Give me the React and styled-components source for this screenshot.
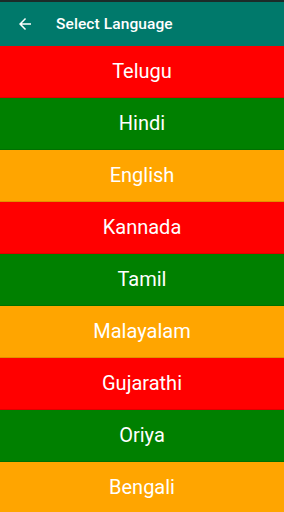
import React from "react";
import styled, { createGlobalStyle } from "styled-components";

const Global = createGlobalStyle`
  html, body { margin: 0; padding: 0; background: #fff; overflow: hidden; }
  body { font-family: Roboto, "Noto Sans", "Liberation Sans", sans-serif; }
`;

const Screen = styled.div`
  width: 284px;
  height: 512px;
  display: flex;
  flex-direction: column;
  overflow: hidden;
`;

const Toolbar = styled.header`
  flex: 0 0 46px;
  box-sizing: border-box;
  border-top: 2px solid #1c2b29;
  background: #00796b;
  display: flex;
  align-items: center;
  padding-left: 16px;
  gap: 22px;
  color: #fff;
`;

const Title = styled.h1`
  margin: 0;
  font-size: 15.5px;
  font-weight: 500;
  letter-spacing: 0.1px;
`;

const Item = styled.div`
  flex: 0 0 52px;
  box-sizing: border-box;
  background: ${(p) => p.$bg};
  border-bottom: 1px solid rgba(0, 0, 0, 0.12);
  display: flex;
  align-items: center;
  justify-content: center;
  padding-bottom: 2px;
  color: #fff;
  font-size: 20px;
`;

const colors = ["#ff0000", "#008000", "#ffa500"];
const langs = ["Telugu", "Hindi", "English", "Kannada", "Tamil", "Malayalam", "Gujarathi", "Oriya", "Bengali"];

export default function App() {
  return (
    <>
      <Global />
      <Screen>
        <Toolbar>
          <svg width="18" height="18" viewBox="0 0 24 24" fill="#fff">
            <path d="M20 11H7.83l5.59-5.59L12 4l-8 8 8 8 1.41-1.41L7.83 13H20v-2z" />
          </svg>
          <Title>Select Language</Title>
        </Toolbar>
        {langs.map((l, i) => (
          <Item key={l} $bg={colors[i % 3]}>{l}</Item>
        ))}
      </Screen>
    </>
  );
}
